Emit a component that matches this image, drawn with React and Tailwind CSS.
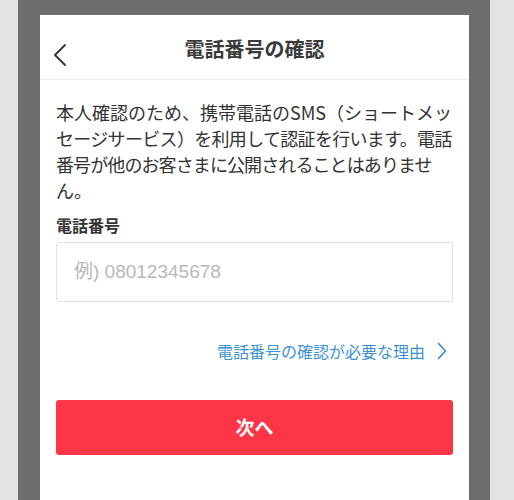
export default function App() {
  return (
    <div className="h-[500px] w-[514px] overflow-hidden bg-[#e3e3e3] pl-[18px] font-['Noto_Sans_CJK_JP','Noto_Sans',sans-serif]">
      <div className="h-full w-[472px] bg-[#6d6d6d] pl-[22px] pt-[15px]">
        <div className="h-full w-[429px] overflow-hidden bg-white">
          <div className="relative flex h-[65px] items-center justify-center border-b border-[#eeeeee]">
            <svg className="absolute left-[12px] top-[28px]" width="16" height="24" viewBox="0 0 16 24" fill="none">
              <path d="M13 2 L3 12 L13 22" stroke="#333" strokeWidth="1.8" strokeLinecap="round" strokeLinejoin="round" />
            </svg>
            <h1 className="mt-[4px] text-[20px] font-bold leading-none text-[#3a3a3a]">電話番号の確認</h1>
          </div>
          <div className="px-[16px] pt-[19px]">
            <div className="text-[18px] leading-[26px] text-[#333]">
              <p className="whitespace-nowrap">本人確認のため、携帯電話のSMS（ショートメッ</p>
              <p className="whitespace-nowrap tracking-[-0.68px]">セージサービス）を利用して認証を行います。電話</p>
              <p className="whitespace-nowrap tracking-[-0.9px]">番号が他のお客さまに公開されることはありませ</p>
              <p className="whitespace-nowrap">ん。</p>
            </div>
            <div className="mt-[10px] text-[16px] font-bold leading-[24px] text-[#333]">電話番号</div>
            <input
              className="mt-[5px] h-[60px] w-full rounded-[3px] border border-[#e2e2e2] px-[17px] font-['Liberation_Sans','Noto_Sans_CJK_JP',sans-serif] text-[19px] text-[#333] outline-none placeholder:text-[#b8b8b8]"
              placeholder="例) 08012345678"
            />
            <div className="mt-[37px] flex items-center justify-end gap-[12px] pr-[6px]">
              <span className="text-[16px] leading-[24px] text-[#3f92d2]">電話番号の確認が必要な理由</span>
              <svg width="10" height="18" viewBox="0 0 10 18" fill="none">
                <path d="M1.5 1.5 L8.5 9 L1.5 16.5" stroke="#3f92d2" strokeWidth="1.8" strokeLinecap="round" strokeLinejoin="round" />
              </svg>
            </div>
            <button className="mt-[37px] flex h-[55px] w-full items-center justify-center rounded-[3px] bg-[#fd3647] text-[19px] font-bold text-white">
              次へ
            </button>
          </div>
        </div>
      </div>
    </div>
  );
}
